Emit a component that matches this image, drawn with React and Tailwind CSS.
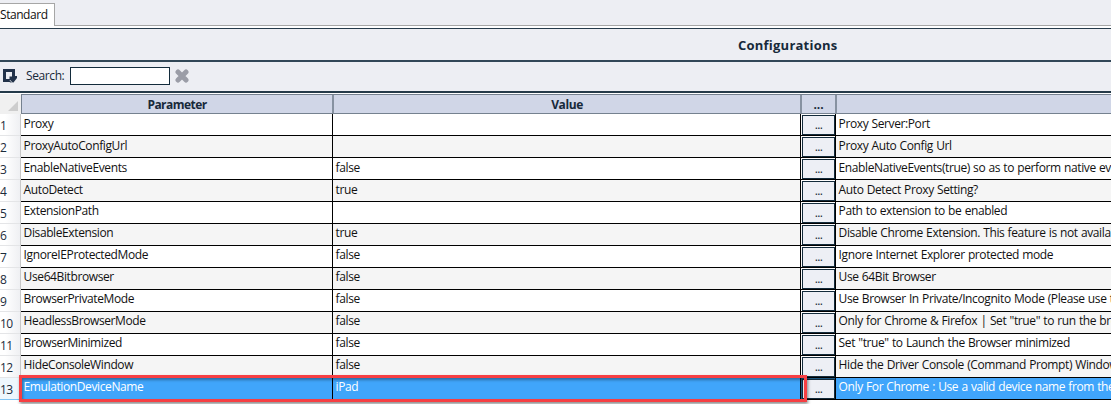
import React from "react";

const rows = [
  ["Proxy", "", "Proxy Server:Port"],
  ["ProxyAutoConfigUrl", "", "Proxy Auto Config Url"],
  ["EnableNativeEvents", "false", "EnableNativeEvents(true) so as to perform native events"],
  ["AutoDetect", "true", "Auto Detect Proxy Setting?"],
  ["ExtensionPath", "", "Path to extension to be enabled"],
  ["DisableExtension", "true", "Disable Chrome Extension. This feature is not available"],
  ["IgnoreIEProtectedMode", "false", "Ignore Internet Explorer protected mode"],
  ["Use64Bitbrowser", "false", "Use 64Bit Browser"],
  ["BrowserPrivateMode", "false", "Use Browser In Private/Incognito Mode (Please use this"],
  ["HeadlessBrowserMode", "false", 'Only for Chrome & Firefox | Set "true" to run the browser'],
  ["BrowserMinimized", "false", 'Set "true" to Launch the Browser minimized'],
  ["HideConsoleWindow", "false", "Hide the Driver Console (Command Prompt) Window"],
  ["EmulationDeviceName", "iPad", "Only For Chrome : Use a valid device name from the list"],
];

function Row({ row, index }) {
  const selected = index === 12;
  const tone = selected
    ? "bg-[#40a5fb] text-white"
    : index % 2
      ? "bg-[#f5f5f5] text-[#111]"
      : "bg-white text-[#111]";
  const leading = index < 4 ? "leading-[19px]" : "leading-[17px]";
  const text = `shrink-0 pl-[2.6px] tracking-[-0.39px] [word-spacing:0.5px] ${leading}`;
  return (
    <div className="flex h-[22px] w-full">
      <div className={`flex h-[22px] w-[21px] shrink-0 items-center border-r border-b border-r-[#c8c8c8] pt-[2px] text-[#1b2b3b] tracking-[-0.5px] ${selected ? "border-b-[#7fc4f4] bg-[#eef7fd]" : "border-b-[#e4e5e7] bg-linear-to-r from-white from-25% to-[#eff0f3]"}`}>
        {index + 1}
      </div>
      <div className={`flex min-w-0 flex-1 border-b border-black ${tone}`}>
        <div className={`w-[312px] border-r border-black ${text}`}>{row[0]}</div>
        <div className={`w-[468px] border-r border-black ${text}`}>{row[1]}</div>
        <div className={`h-[21px] w-[35px] shrink-0 border-r border-black pt-px pl-px ${selected ? "bg-[#1c567f]" : "bg-white"}`}>
          <div className="h-5 w-[33px] border border-[#132b3b] bg-[#edeff5] text-center leading-[18px] tracking-[-0.6px] text-[#17293a]">...</div>
        </div>
        <div className={`w-[275px] overflow-hidden ${text}`}>{row[2]}</div>
      </div>
    </div>
  );
}

export default function App() {
  return (
    <div className="relative flex h-[404px] w-[1111px] flex-col overflow-hidden bg-white font-['Open_Sans','Noto_Sans',sans-serif] text-[12px] whitespace-nowrap text-[#17293a]">
      <div className="flex h-[26px] shrink-0 bg-[#edeef3]">
        <div className="mt-[3px] h-[23px] w-[55px] border-t border-r border-[#a6a6a6] bg-white leading-[22px] tracking-[-0.45px] text-[#111]">Standard</div>
        <div className="flex-1 border-b border-[#a6a6a6]" />
      </div>
      <div className="h-[2px] shrink-0 bg-white" />
      <div className="h-[34px] shrink-0 border-t border-b-2 border-t-[#263b4b] border-b-[#324757] bg-[#edeef3]">
        <div className="ml-[738px] text-[13px] leading-[33px] font-bold tracking-[0.23px]">Configurations</div>
      </div>
      <div className="flex h-[31px] shrink-0 items-center border-b-2 border-[#243a49] bg-[#edeef3]">
        <svg className="ml-[3px] h-[15px] w-[14px] shrink-0" viewBox="0 0 14 15">
          <path d="M0 0H12V7H14V9L10.5 13.5H7.5L6.5 13H0Z M3 3V10H6.5V7.5H9V3Z" fill="#22324a" fillRule="evenodd" />
          <path d="M6.8 11L9.3 13.8" stroke="#edeef3" strokeWidth="0.8" />
        </svg>
        <span className="-mt-px ml-[9px] w-11 tracking-[-0.4px]">Search:</span>
        <div className="-mt-px h-[18px] w-[100px] border border-[#132b3b] bg-white" />
        <svg className="-mt-px ml-[5px] h-[14px] w-[14px]" viewBox="0 0 14 14">
          <path d="M3 3L11 11M11 3L3 11" stroke="#9b9da7" strokeWidth="5" strokeLinecap="round" />
        </svg>
      </div>
      <div className="flex h-[21px] shrink-0 pt-px">
        <div className="flex w-[21px] shrink-0 items-end justify-end bg-[#f0f0f0] pr-[3px] pb-[3px]">
          <svg className="h-[10px] w-[10px]" viewBox="0 0 10 10"><path d="M10 0V10H0Z" fill="#cdcdcd" /></svg>
        </div>
        <div className="flex flex-1 border-y border-l border-[#75818f] bg-[#d0d6e7] text-center leading-[19px] font-bold tracking-[-0.55px]">
          <div className="w-[312px] border-r-2 border-[#8792a1]">Parameter</div>
          <div className="w-[468px] border-r-2 border-[#8792a1] tracking-[-0.4px]">Value</div>
          <div className="w-[35px] border-r-2 border-[#8792a1] tracking-[-0.1px]">...</div>
        </div>
      </div>
      <div className="flex w-full flex-col">
        {rows.map((row, i) => <Row key={row[0]} row={row} index={i} />)}
      </div>
      <div className="absolute top-[375px] left-[19px] h-[27px] w-[788px] border-[3px] border-[#f63f43] shadow-[1px_2px_3px_rgba(0,0,0,0.45),inset_1px_2px_3px_rgba(0,0,0,0.35)]" />
    </div>
  );
}
